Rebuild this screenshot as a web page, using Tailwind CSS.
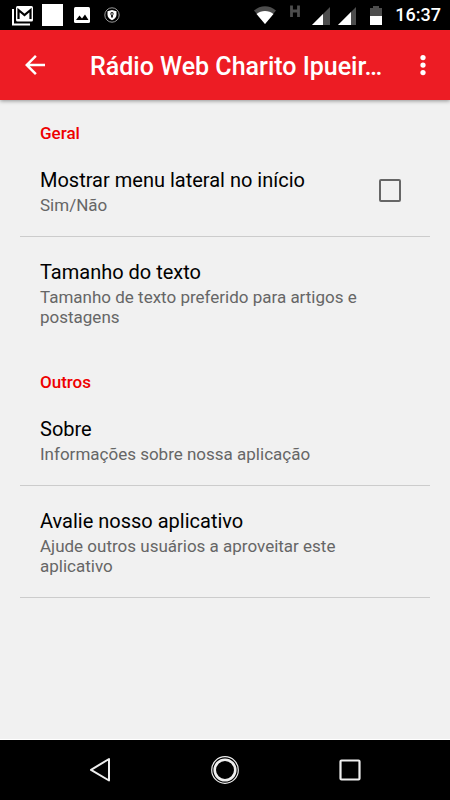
<!DOCTYPE html>
<html lang="pt-BR">
<head>
<meta charset="utf-8">
<meta name="viewport" content="width=device-width, initial-scale=1">
<title>Configurações</title>
<script src="https://cdn.jsdelivr.net/npm/@tailwindcss/browser@4"></script>
</head>
<body class="flex min-h-screen flex-col bg-[#f1f1f1] font-[Roboto,'Noto_Sans',sans-serif] text-black">
  <div class="flex h-[30px] items-center justify-between bg-black pr-[9px] pl-3 text-white">
    <div class="flex items-center gap-[9px]">
      <svg class="h-[22px] w-[21px]" viewBox="0 0 21 22" fill="none"><path d="M1 5v15.500h17" stroke="#fff" stroke-width="2"/><rect x="4" y="2" width="17" height="15.500" rx="1.500" fill="#fff"/><path d="M6.500 15V6l6 5 6-5v9" stroke="#000" stroke-width="2.200"/></svg>
      <span class="h-[22px] w-[21px] bg-white"></span>
      <svg class="ml-[2px] h-4 w-4" viewBox="0 0 16 16"><rect width="16" height="16" rx="1.500" fill="#fff"/><path d="M2 13l3.500-4.500L8 11.500 11 7.500 14.500 13z" fill="#000"/></svg>
      <svg class="ml-[5px] h-4 w-4" viewBox="0 0 16 16"><circle cx="8" cy="8" r="7.200" fill="none" stroke="#999" stroke-width="1"/><path d="M8 3l4.500 1.300v3.500c0 2.500-2 4.400-4.500 5.500-2.500-1.100-4.500-3-4.500-5.500V4.300z" fill="#fff"/><path d="M8 5a1.800 1.800 0 0 0-1 3.200V10.500h2V8.200A1.800 1.800 0 0 0 8 5z" fill="#222"/><circle cx="8" cy="7" r=".8" fill="#fff"/></svg>
    </div>
    <div class="flex items-center">
      <svg class="h-[30px] w-[136px]" viewBox="0 0 136 30"><path d="M0 10.500C6.500 4.700 15.500 4.700 22 10.500L11 24z" fill="#4d4d4d"/><path d="M2.500 14C7 10 15 10 19.500 14L11 24z" fill="#fff"/><path d="M37.500 5.500v11.500M44.500 5.500v11.500M37.500 11h7" stroke="#4d4d4d" stroke-width="2.800" fill="none"/><path d="M58 25L76 7v18z" fill="#4d4d4d"/><path d="M58 25l11-11v11z" fill="#fff"/><path d="M84 25l18-18v18z" fill="#4d4d4d"/><path d="M84 25l13-13v13z" fill="#fff"/><path d="M116 8h3V6h6v2h3v8h-12z" fill="#4d4d4d"/><path d="M116 16h12v9h-12z" fill="#fff"/></svg>
      <span class="ml-[5px] text-[18px] leading-[30px] font-medium">16:37</span>
    </div>
  </div>

  <header class="flex h-[70px] items-center bg-[#ed1c24] pr-3 pl-5 text-white shadow-[0_1px_4px_rgba(0,0,0,0.4)]">
    <button type="button" aria-label="Voltar" class="flex h-10 w-[30px] items-center justify-center">
      <svg class="h-[30px] w-[30px]" viewBox="0 0 24 24" fill="#fff"><path d="M20 11H7.830l5.590-5.590L12 4l-8 8 8 8 1.410-1.410L7.830 13H20v-2z"/></svg>
    </button>
    <h1 class="ml-10 min-w-0 flex-1 truncate pt-[3px] text-[25px] leading-[30px] font-medium">Rádio Web Charito Ipueir…</h1>
    <button type="button" aria-label="Mais opções" class="ml-[5px] flex h-10 w-[30px] items-center justify-center">
      <svg class="h-[30px] w-[30px]" viewBox="0 0 24 24" fill="#fff"><circle cx="12" cy="6" r="2.100"/><circle cx="12" cy="12" r="2.100"/><circle cx="12" cy="18" r="2.100"/></svg>
    </button>
  </header>

  <main class="flex-1 border-b border-white px-5">
    <section>
      <h2 class="px-5 pt-[21px] text-[17px] leading-6 font-medium text-[#ee0000]">Geral</h2>
      <div class="flex items-center justify-between border-b border-[#cccccc] px-5 pt-5 pb-[21px]">
        <label for="side-menu">
          <span class="block text-[20px] leading-[30px]">Mostrar menu lateral no início</span>
          <span class="block text-[17px] leading-5 text-[#666666]">Sim/Não</span>
        </label>
        <input id="side-menu" type="checkbox" class="mr-[9px] h-[23px] w-[22px] appearance-none rounded-[2px] border-2 border-[#666666] checked:bg-[#ed1c24]">
      </div>
      <button type="button" class="block w-full border-b border-transparent px-5 pt-5 pb-[21px] text-left">
        <span class="block text-[20px] leading-[30px]">Tamanho do texto</span>
        <span class="block text-[17px] leading-5 text-[#666666]">Tamanho de texto preferido para artigos e postagens</span>
      </button>
    </section>
    <section>
      <h2 class="px-5 pt-[21px] text-[17px] leading-6 font-medium text-[#ee0000]">Outros</h2>
      <button type="button" class="block w-full border-b border-[#cccccc] px-5 pt-5 pb-[21px] text-left">
        <span class="block text-[20px] leading-[30px]">Sobre</span>
        <span class="block text-[17px] leading-5 text-[#666666]">Informações sobre nossa aplicação</span>
      </button>
      <button type="button" class="block w-full border-b border-[#cccccc] px-5 pt-5 pb-[21px] text-left">
        <span class="block text-[20px] leading-[30px]">Avalie nosso aplicativo</span>
        <span class="block text-[17px] leading-5 text-[#666666]">Ajude outros usuários a aproveitar este aplicativo</span>
      </button>
    </section>
  </main>

  <nav aria-label="Sistema" class="flex h-[60px] items-center justify-center gap-[95px] bg-black">
    <button type="button" aria-label="Voltar"><svg class="h-[30px] w-[30px]" viewBox="0 0 30 30" fill="none" stroke="#eee" stroke-width="2"><path d="M24 4v21.500L6 14.800z" stroke-linejoin="round"/></svg></button>
    <button type="button" aria-label="Início"><svg class="h-[30px] w-[30px]" viewBox="0 0 30 30" fill="none" stroke="#eee"><circle cx="15" cy="15" r="13.300" stroke-width="1.200"/><circle cx="15" cy="15" r="10.300" stroke-width="2.600"/></svg></button>
    <button type="button" aria-label="Aplicativos recentes"><svg class="h-[30px] w-[30px]" viewBox="0 0 30 30" fill="none" stroke="#eee" stroke-width="2.200"><rect x="5.500" y="5.500" width="19" height="19" rx="1"/></svg></button>
  </nav>
</body>
</html>
